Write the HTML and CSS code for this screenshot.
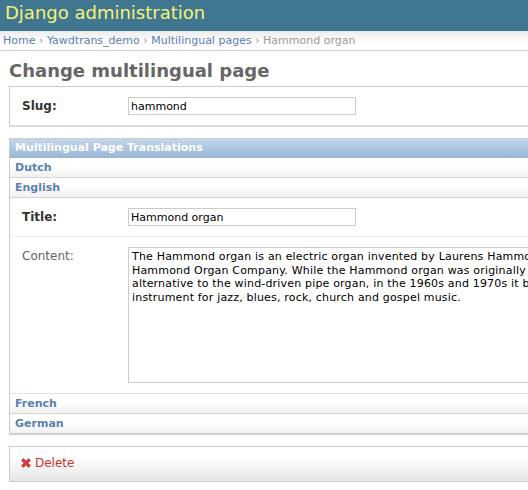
FILE: index.html
```html
<!DOCTYPE html>
<html>
<head>
<meta charset="utf-8">
<title>Change multilingual page</title>
<link rel="stylesheet" href="styles.css">
</head>
<body>
<div class="header"><span class="brand">Django administration</span></div>
<div class="breadcrumbs"><a href="#">Home</a> › <a href="#">Yawdtrans_demo</a> › <a href="#">Multilingual pages</a> › Hammond organ</div>
<div class="content">
  <h1 class="title">Change multilingual page</h1>
  <div class="module">
    <div class="form-row">
      <label class="field-label required">Slug:</label>
      <input class="text-input" type="text" value="hammond">
    </div>
  </div>
  <div class="inline-group">
    <h2 class="inline-head">Multilingual Page Translations</h2>
    <div class="lang-row"><a href="#">Dutch</a></div>
    <div class="lang-row"><a href="#">English</a></div>
    <div class="lang-body">
      <div class="form-row">
        <label class="field-label required">Title:</label>
        <input class="text-input" type="text" value="Hammond organ">
      </div>
      <div class="form-row last">
        <label class="field-label">Content:</label>
        <textarea class="text-area">The Hammond organ is an electric organ invented by Laurens Hammond and manufactured by the Hammond Organ Company. While the Hammond organ was originally sold to churches as a lower-cost alternative to the wind-driven pipe organ, in the 1960s and 1970s it became a standard keyboard instrument for jazz, blues, rock, church and gospel music.</textarea>
      </div>
    </div>
    <div class="lang-row"><a href="#">French</a></div>
    <div class="lang-row end"><a href="#">German</a></div>
  </div>
  <div class="submit-row">
    <a href="#" class="deletelink"><svg class="del-icon" width="10" height="10" viewBox="0 0 10 10"><path d="M0.6 2.4 L2.4 0.6 L5 3.2 L7.6 0.6 L9.4 2.4 L6.8 5 L9.4 7.6 L7.6 9.4 L5 6.8 L2.4 9.4 L0.6 7.6 L3.2 5 Z" fill="#e23a3a" stroke="#b71c1c" stroke-width="0.7"/></svg>Delete</a>
  </div>
</div>
</body>
</html>
```
FILE: styles.css
```css
html, body {
  overflow: hidden;
}
body {
  margin: 0;
  font-family: "DejaVu Sans", Verdana, sans-serif;
  color: #333;
  background: #fff;
}
a {
  text-decoration: none;
  color: #5b80b2;
}
.header {
  height: 31px;
  background: #417690;
  padding-left: 5px;
}
.brand {
  font-size: 18px;
  line-height: 25px;
  color: #f4f379;
}
.breadcrumbs {
  font-size: 11px;
  line-height: 13px;
  padding: 3px 3px 3px 3px;
  color: #999;
  background: linear-gradient(#ececec, #fff 60%);
  border-bottom: 1px solid #ccc;
  white-space: nowrap;
}
.content {
  padding: 9px 0 0 9px;
  width: 760px;
}
.title {
  margin: 0 0 4px 0;
  font-size: 18px;
  line-height: 22px;
  font-weight: bold;
  color: #666;
}
.module {
  border-top: 1px solid #ccc;
  border-left: 1px solid #ccc;
  border-bottom: 2px solid #ddd;
}
.form-row {
  display: flex;
  align-items: flex-start;
  padding: 10px 12px 10px 12px;
  border-bottom: 1px solid #eee;
  font-size: 12px;
}
.form-row.last {
  border-bottom: 1px solid #e4e4e4;
}
.module .form-row {
  border-bottom: 0;
  padding-bottom: 10px;
}
.field-label {
  width: 106px;
  flex: none;
  padding-top: 2px;
  line-height: 14px;
  color: #666;
}
.field-label.required {
  font-weight: bold;
  color: #333;
}
.text-input {
  box-sizing: border-box;
  width: 228px;
  height: 18px;
  margin: 0;
  padding: 0 2px;
  border: 1px solid #ccc;
  font-family: "DejaVu Sans", Verdana, sans-serif;
  font-size: 11px;
  color: #000;
  background: #fff;
}
.inline-group {
  margin-top: 11px;
  border-left: 1px solid #ccc;
}
.inline-head {
  margin: 0;
  padding: 2px 5px 4px 5px;
  font-size: 11px;
  line-height: 13px;
  font-weight: bold;
  color: #fff;
  background: linear-gradient(#c3d6ea, #98b7d6);
  border-top: 1px solid #ccc;
}
.lang-row {
  padding: 3px 5px 3px 5px;
  font-size: 11px;
  line-height: 13px;
  font-weight: bold;
  background: linear-gradient(#fff, #fff 40%, #f1f1f1);
  border-bottom: 1px solid #d8d8d8;
}
.lang-row.end {
  border-bottom: 2px solid #d0d0d0;
}
.lang-body {
  background: #fff;
}
.text-area {
  box-sizing: border-box;
  width: 624px;
  flex: none;
  height: 136px;
  margin: 0;
  padding: 2px 3px;
  border: 1px solid #ccc;
  font-family: "DejaVu Sans", Verdana, sans-serif;
  font-size: 11px;
  line-height: 13.5px;
  letter-spacing: 0.18px;
  color: #000;
  resize: none;
  overflow: hidden;
}
.submit-row {
  margin-top: 11px;
  padding: 9px 11px 10px 11px;
  font-size: 12px;
  line-height: 14px;
  border-top: 1px solid #ccc;
  border-left: 1px solid #ccc;
  border-bottom: 1px solid #ccc;
  background: linear-gradient(#fff, #fff 30%, #e6e6e6);
}
.deletelink {
  display: inline-flex;
  align-items: center;
  gap: 4px;
  color: #cc3434;
}
.del-icon {
  display: block;
}
```
